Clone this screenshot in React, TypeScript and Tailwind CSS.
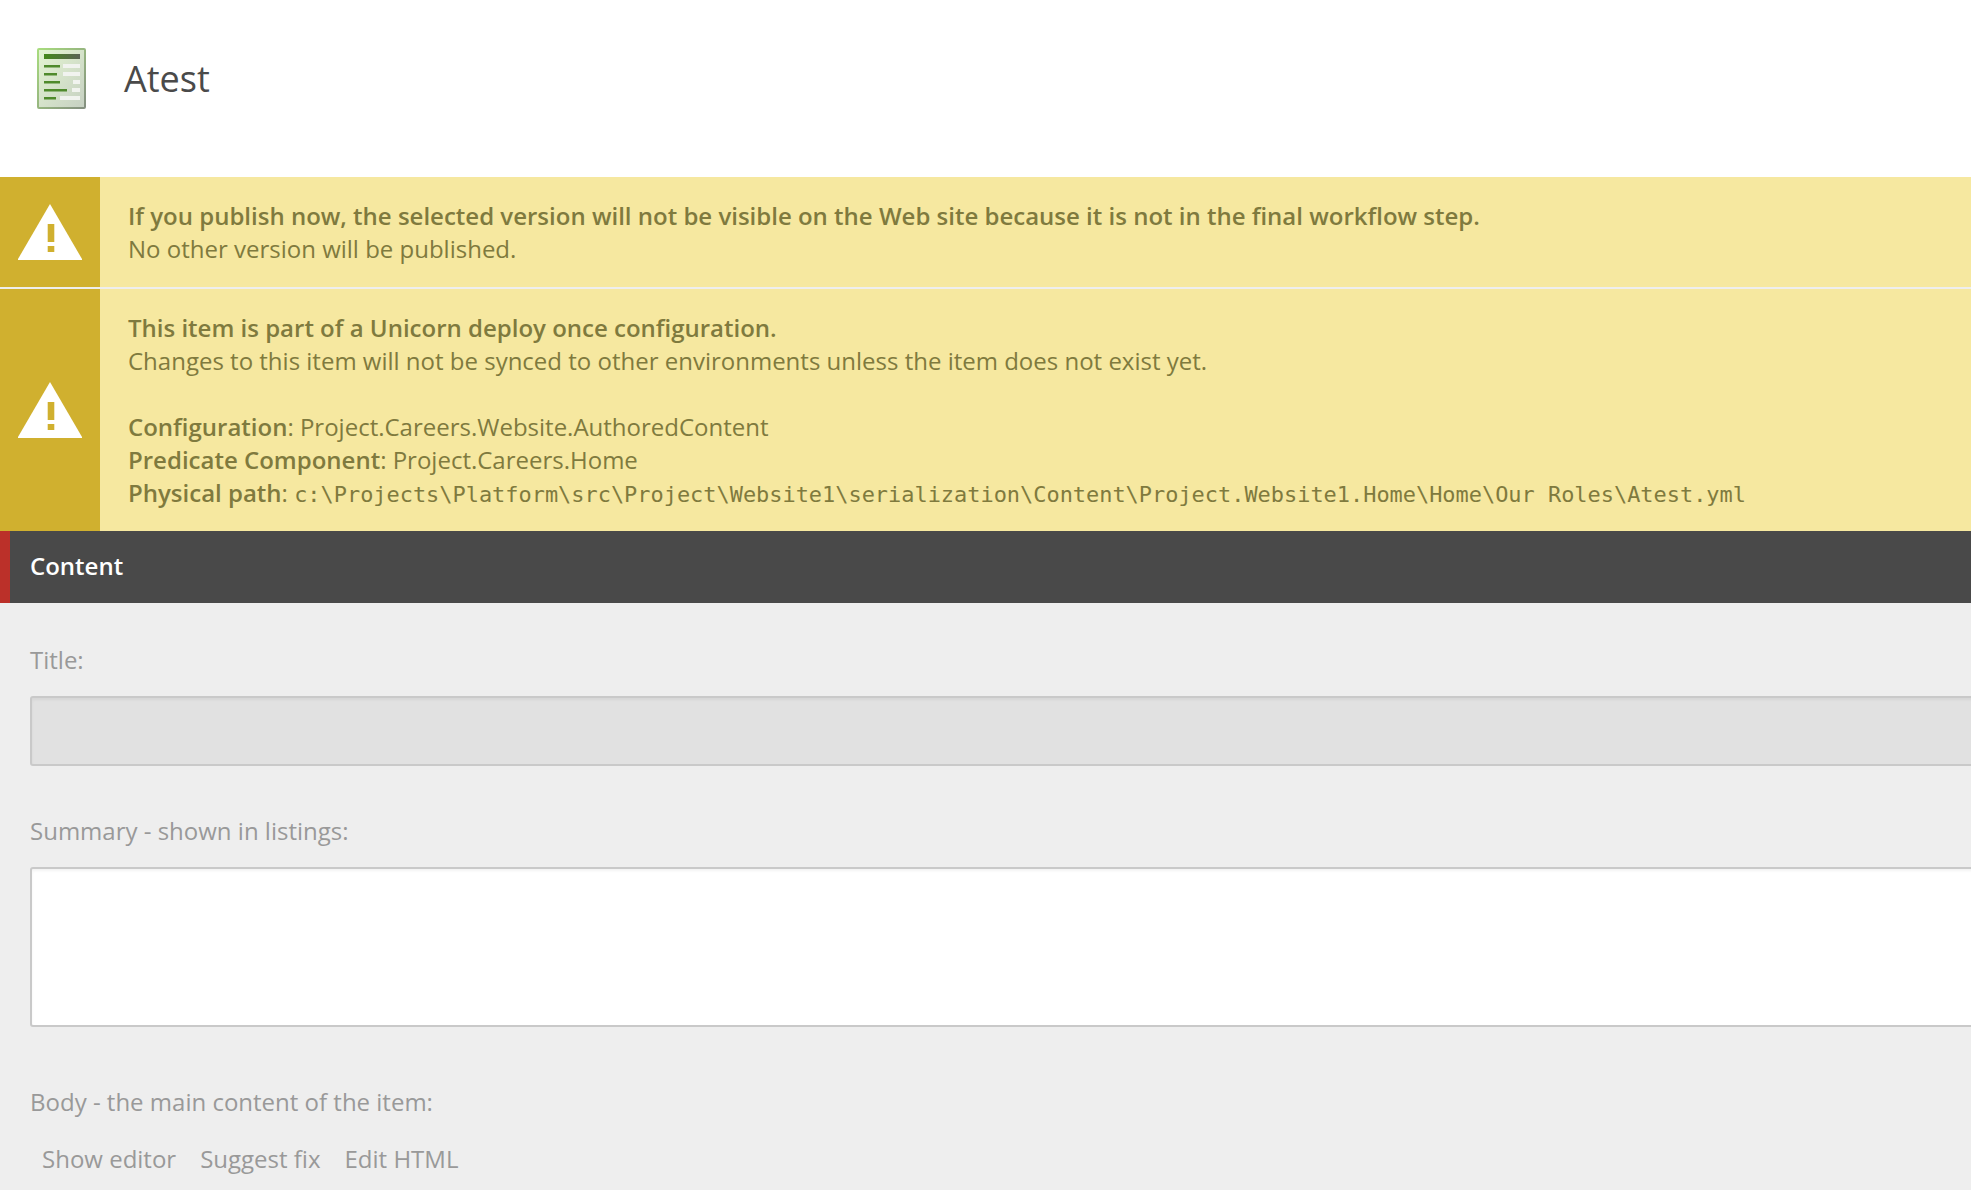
const openSans = "font-['Open_Sans',sans-serif]";

function ItemIcon() {
  // label width, box x, box width
  const rows = [
    { y: 18, w: 16, x: 26, bw: 17 },
    { y: 26, w: 13, x: 26, bw: 17 },
    { y: 34, w: 16, x: 36, bw: 7 },
    { y: 42, w: 23, x: 35, bw: 8 },
    { y: 50, w: 12, x: 23, bw: 20 },
  ];
  return (
    <svg viewBox="0 0 49 61" className="h-[61px] w-[49px] shrink-0">
      <defs>
        <linearGradient id="page" x1="0" y1="0" x2="1" y2="1">
          <stop offset="0" stopColor="#e4f5d2" />
          <stop offset="1" stopColor="#c6d0c2" />
        </linearGradient>
        <linearGradient id="edge" x1="0" y1="0" x2="1" y2="1">
          <stop offset="0" stopColor="#a8dc7e" />
          <stop offset="1" stopColor="#848f80" />
        </linearGradient>
        <linearGradient id="bar" x1="0" y1="0" x2="1" y2="0">
          <stop offset="0" stopColor="#44881a" />
          <stop offset="1" stopColor="#5a6255" />
        </linearGradient>
      </defs>
      <rect x="1" y="1" width="47" height="59" rx="1" fill="url(#page)" stroke="url(#edge)" strokeWidth="2" />
      <rect x="7" y="6" width="36" height="5" fill="url(#bar)" />
      {rows.map((r) => (
        <g key={r.y}>
          <rect x="7" y={r.y - 1} width={r.w} height="2.5" fill="#4f8a2c" />
          <rect x={r.x} y={r.y - 2} width={r.bw} height="4" fill="#f1f3ef" />
        </g>
      ))}
    </svg>
  );
}

function WarningIcon() {
  return (
    <svg viewBox="0 0 64 56" className="h-[56px] w-[64px]">
      <path d="M32 0 L64 55 L64 56 L0 56 L0 55 Z" fill="#fff" />
      <rect x="29.7" y="20" width="6.6" height="18" fill="#d0b02f" />
      <rect x="29.7" y="42" width="6.6" height="6" fill="#d0b02f" />
    </svg>
  );
}

function Warning({ className, children }: { className: string; children: React.ReactNode }) {
  return (
    <div className={`flex ${className}`}>
      <div className="flex w-[100px] shrink-0 items-center justify-center bg-[#d0b02f]">
        <WarningIcon />
      </div>
      <div className="min-w-0 flex-1 pl-[28px] pt-[22px] text-[24px] leading-[33px] text-[#7f7a3e]">
        {children}
      </div>
    </div>
  );
}

export default function App() {
  return (
    <div className={`h-[1190px] w-full overflow-hidden bg-[#eeeeee] ${openSans}`}>
      <header className="flex h-[177px] items-center gap-[38px] bg-white pb-[20px] pl-[37px]">
        <ItemIcon />
        <h1 className="text-[36px] font-normal text-[#4a4a4a]">Atest</h1>
      </header>

      <Warning className="h-[110px] bg-[#f6e8a0]">
        <p className="font-semibold">
          If you publish now, the selected version will not be visible on the Web site because it is not in the final workflow step.
        </p>
        <p>No other version will be published.</p>
      </Warning>
      <div className="h-[2px] bg-[#eeeeee]" />
      <Warning className="h-[242px] bg-[#f6e8a0]">
        <p className="font-semibold">This item is part of a Unicorn deploy once configuration.</p>
        <p>Changes to this item will not be synced to other environments unless the item does not exist yet.</p>
        <p className="mt-[33px]">
          <b className="font-semibold">Configuration</b>: Project.Careers.Website.AuthoredContent
        </p>
        <p>
          <b className="font-semibold">Predicate Component</b>: Project.Careers.Home
        </p>
        <p>
          <b className="font-semibold">Physical path</b>:{" "}
          <code className="font-['DejaVu_Sans_Mono',monospace] text-[21.93px]">
            {"c:\\Projects\\Platform\\src\\Project\\Website1\\serialization\\Content\\Project.Website1.Home\\Home\\Our Roles\\Atest.yml"}
          </code>
        </p>
      </Warning>

      <div className="flex h-[72px] items-center border-l-[10px] border-[#bb3029] bg-[#494949] pb-[2px] pl-[20px] text-[24px] font-semibold text-white">
        Content
      </div>

      <div className="pl-[30px] pt-[40px] text-[24px] leading-[33px] text-[#999999]">
        <label className="block">Title:</label>
        <div className="mt-[20px] h-[70px] w-[calc(100%+20px)] rounded-[3px] border-2 border-[#c9c9c9] bg-[#e1e1e1] shadow-[inset_0_2px_3px_rgba(0,0,0,0.05)]" />
        <label className="mt-[48px] block">Summary - shown in listings:</label>
        <div className="mt-[20px] h-[160px] w-[calc(100%+20px)] rounded-[3px] border-2 border-[#c9c9c9] bg-white shadow-[inset_0_2px_3px_rgba(0,0,0,0.05)]" />
        <label className="mt-[58px] block">Body - the main content of the item:</label>
        <div className="mt-[24px] flex gap-[24px] pl-[12px]">
          <span>Show editor</span>
          <span>Suggest fix</span>
          <span>Edit HTML</span>
        </div>
      </div>
    </div>
  );
}
